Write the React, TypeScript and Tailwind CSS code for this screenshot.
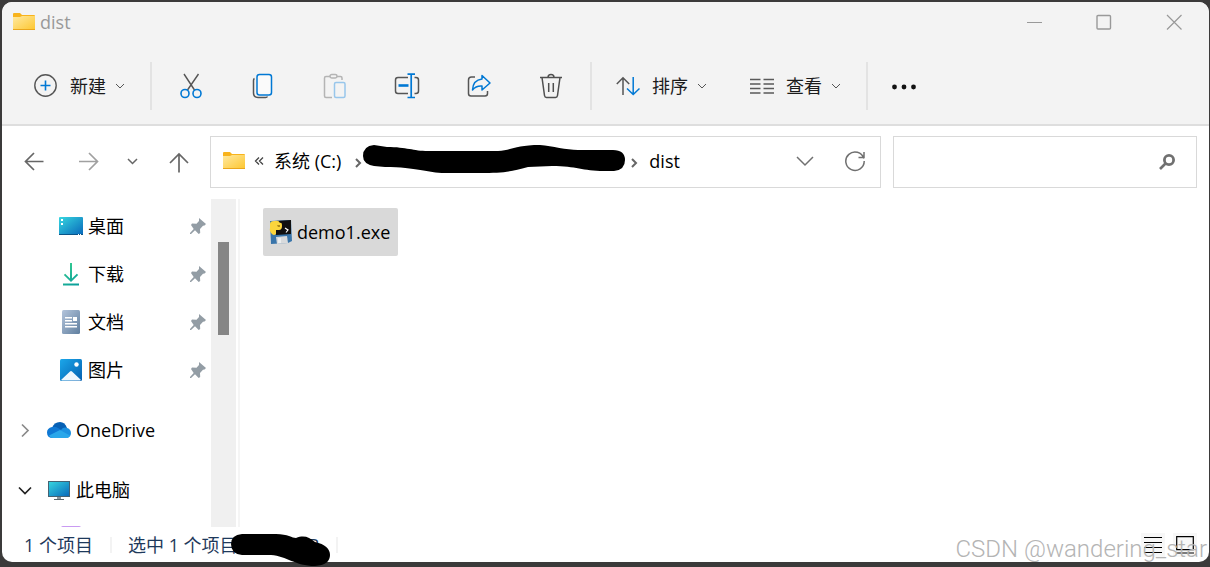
import React from 'react';

type IconProps = { className?: string };

const ChevronDown: React.FC<IconProps> = ({ className }) => (
    <svg viewBox="0 0 12 12" className={className} fill="none" stroke="currentColor">
        <path d="M2 4l4 4 4-4" />
    </svg>
);

const ChevronRight: React.FC<IconProps> = ({ className }) => (
    <svg viewBox="0 0 12 12" className={className} fill="none" stroke="currentColor" strokeWidth="2">
        <path d="M3 2l4 4-4 4" />
    </svg>
);

const FolderIcon: React.FC = () => (
    <svg viewBox="0 0 24 20" className="h-5 w-6 shrink-0">
        <defs>
            <linearGradient id="folder" x1="0" y1="0" x2="1" y2="1">
                <stop offset="0" stopColor="#ffe9a0" />
                <stop offset="1" stopColor="#fdc62f" />
            </linearGradient>
        </defs>
        <path d="M1 2q0-1 1-1h6l2 2h12q1 0 1 1v5H1z" fill="#f8b31c" />
        <path d="M1 5h7l2-1h13v14H1z" fill="url(#folder)" />
        <path d="M1 17h22v1H1z" fill="#eaa61c" />
    </svg>
);

const NewIcon: React.FC = () => (
    <svg viewBox="0 0 24 24" className="h-6 w-6" fill="none" strokeWidth="1.4">
        <circle cx="11.500" cy="11.500" r="10.700" stroke="#555" />
        <path d="M11.500 6.500v10M6.500 11.500h10" stroke="#0078d4" strokeWidth="1.6" />
    </svg>
);

const CutIcon: React.FC = () => (
    <svg viewBox="0 0 24 26" className="h-[26px] w-6" fill="none" strokeWidth="1.4">
        <path d="M5 1l10.5 16M19.5 1L8.5 17" stroke="#555" />
        <circle cx="6" cy="20.5" r="4" stroke="#0078d4" strokeWidth="1.6" />
        <circle cx="18" cy="20.5" r="4" stroke="#0078d4" strokeWidth="1.6" />
    </svg>
);

const CopyIcon: React.FC = () => (
    <svg viewBox="0 0 24 26" className="h-[26px] w-6" fill="none" strokeWidth="1.5">
        <path d="M3.500 5.500q-1 .5-1 2V20q0 4.500 4.500 4.500h7.500q1.500 0 2-1" stroke="#555" />
        <rect x="6" y="1.500" width="14.500" height="20.500" rx="2.500" stroke="#0078d4" fill="#fafafa" />
    </svg>
);

const PasteIcon: React.FC = () => (
    <svg viewBox="0 0 24 26" className="h-[26px] w-6" fill="none" strokeWidth="1.5">
        <path d="M7 3.500H3q-1.500 0-1.500 1.500v18q0 1.500 1.500 1.500h6M14 3.500h3.500q1.500 0 1.500 1.500v2" stroke="#b4b4b4" />
        <rect x="7" y="1.500" width="7" height="3.500" rx="1.700" stroke="#b4b4b4" />
        <rect x="11.500" y="9.500" width="10.500" height="15" rx="1.500" stroke="#98c6eb" />
    </svg>
);

const RenameIcon: React.FC = () => (
    <svg viewBox="0 0 26 26" className="h-[26px] w-[26px]" fill="none" strokeWidth="1.500">
        <path d="M14 4.500H4Q1.500 4.500 1.500 7v11q0 2.500 2.500 2.500h10M20.500 4.500h1.500q2.500 0 2.500 2.500v11q0 2.500-2.500 2.500h-1.500" stroke="#555" />
        <path d="M13.500 1.200h7.500M13.500 24.500h7.500M17.200 1.200v23.300" stroke="#0078d4" strokeWidth="1.700" />
        <path d="M4.500 12.500h10" stroke="#0078d4" strokeWidth="2.600" />
    </svg>
);

const ShareIcon: React.FC = () => (
    <svg viewBox="0 0 24 24" className="h-6 w-6" fill="none" strokeWidth="1.500">
        <path d="M8 3H4.500Q1.500 3 1.500 6v13.500q0 2.500 2.500 2.500h14q2.500 0 2.500-2.500V17" stroke="#555" />
        <path d="M15 1.500l8 7.500-8 7v-4q-6-.5-9.500 4Q6 6 15 5z" stroke="#0078d4" strokeLinejoin="round" />
    </svg>
);

const DeleteIcon: React.FC = () => (
    <svg viewBox="0 0 24 26" className="h-[26px] w-6" fill="none" stroke="#4f4f4f" strokeWidth="1.500">
        <path d="M1 4.500h22M9 4.500q0-3 3-3t3 3M3 4.500l2.500 18q.3 2 2 2h9q1.700 0 2-2L21 4.500M9.700 10v9M14.300 10v9" />
    </svg>
);

const SortIcon: React.FC = () => (
    <svg viewBox="0 0 24 24" className="h-6 w-6" fill="none" strokeWidth="1.500">
        <path d="M7 21V4M.8 10L7 3.700 13.200 10" stroke="#555" />
        <path d="M17.200 3v17.500M11 14.500l6.200 6 6.300-6" stroke="#0078d4" />
    </svg>
);

const ViewIcon: React.FC = () => (
    <svg viewBox="0 0 24 24" className="h-6 w-6" stroke="#5a5a5a" strokeWidth="1.300">
        <path d="M0 5.500h10.500M0 10h10.500M0 14.500h10.500M0 19h10.500M13.500 5.500H24M13.500 10H24M13.500 14.500H24M13.500 19H24" />
    </svg>
);

const DesktopIcon: React.FC = () => (
    <svg viewBox="0 0 24 24" className="h-6 w-6">
        <defs>
            <linearGradient id="screen" x1="0" y1="0" x2="1" y2="1">
                <stop offset="0" stopColor="#37d7e0" />
                <stop offset="1" stopColor="#0867ba" />
            </linearGradient>
        </defs>
        <rect y="3" width="24" height="18" rx="1" fill="url(#screen)" />
        <path d="M2 5h2v2H2zM2 9h2v2H2z" fill="#fff" />
        <path d="M0 20h24v1H0z" fill="#0a5487" />
        <path d="M19 20h1v1h-1zM21 20h1v1h-1z" fill="#fff" />
    </svg>
);

const DownloadIcon: React.FC = () => (
    <svg viewBox="0 0 24 24" className="h-6 w-6" fill="none">
        <defs>
            <linearGradient id="download" gradientUnits="userSpaceOnUse" x1="4" y1="0" x2="20" y2="24">
                <stop offset="0" stopColor="#3bd28f" />
                <stop offset="1" stopColor="#069a9c" />
            </linearGradient>
        </defs>
        <path d="M11 1h2v15.500l4.800-4.800 1.400 1.400L12 20l-7.200-6.900 1.400-1.400 4.800 4.800zM4 21.500h16v2H4z" fill="url(#download)" />
    </svg>
);

const DocumentIcon: React.FC = () => (
    <svg viewBox="0 0 24 24" className="h-6 w-6">
        <defs>
            <linearGradient id="document" x1="0" y1="0" x2="1" y2="1">
                <stop offset="0" stopColor="#b3c4db" />
                <stop offset="1" stopColor="#607f9f" />
            </linearGradient>
        </defs>
        <rect x="3" width="18" height="24" rx="1.500" fill="url(#document)" />
        <path d="M6 7h7v1.500H6zM6 10h7v1.500H6zM14 7h4v4h-4zM6 13h12v1.500H6zM6 16h12v1.500H6z" fill="#fff" />
    </svg>
);

const PictureIcon: React.FC = () => (
    <svg viewBox="0 0 24 24" className="h-6 w-6">
        <defs>
            <linearGradient id="picture" x1="0" y1="0" x2="1" y2="1">
                <stop offset="0" stopColor="#1ba7ea" />
                <stop offset="1" stopColor="#0660b0" />
            </linearGradient>
        </defs>
        <rect x="1" y="1" width="22" height="22" rx="1.500" fill="url(#picture)" />
        <circle cx="17.500" cy="6.500" r="2.200" fill="#fff" />
        <path d="M2 22l9-8.500q1-1 2 0L22 22q-1 .5-2 .5H4q-1 0-2-.5z" fill="#f0f7fd" />
    </svg>
);

const CloudIcon: React.FC = () => (
    <svg viewBox="0 0 24 24" className="h-6 w-6">
        <path d="M5 10Q7 4 13 4q5 0 7 6l-6 6z" fill="#0660b5" />
        <path d="M5 9q3-1 6 1l7 4-12 6Q0 20 0 14.500 0 10 5 9z" fill="#0f78d4" />
        <path d="M14 12q2-3 5.500-2.300Q24 11 24 15q0 4-4 5l-6-4z" fill="#1b90e0" />
        <path d="M2 17.500L13 12l10 5.500q-1 2.500-4 2.500H6q-3 0-4-2.500z" fill="#2aa7ea" />
    </svg>
);

const ComputerIcon: React.FC = () => (
    <svg viewBox="0 0 24 24" className="h-6 w-6">
        <rect x="1.500" y="3.500" width="21" height="15" fill="url(#screen)" stroke="#456273" />
        <path d="M10 19h4v2h-4z" fill="#8b979d" />
        <path d="M7 21h10v1H7z" fill="#59666d" />
    </svg>
);

const VideoIcon: React.FC = () => (
    <svg viewBox="0 0 24 24" className="h-6 w-6">
        <rect x="2" width="20" height="24" rx="2" fill="#c99af2" />
    </svg>
);

const PinIcon: React.FC = () => (
    <svg viewBox="0 0 18 18" className="h-[18px] w-[18px]">
        <path d="M10 1l7 6-1.500 1.500-1.500.2-3 3.300.2 4-1.500 1-3.700-3.700L2 17H1v-1l3.700-4L2 8l1-1.500 4.500.2L10 4V2.500z" fill="#939da5" />
    </svg>
);

const PythonAppIcon: React.FC = () => (
    <svg viewBox="0 0 24 26" className="h-[26px] w-6">
        <path d="M1 2l21-1 1 21-4 2-17 1z" fill="#3975aa" />
        <path d="M6 2l16-1v14L7 16z" fill="#101010" />
        <path d="M7 18l11-1 1 7-11 1z" fill="#d8dadc" />
        <path d="M9 19h3v5H9z" fill="#eceeef" />
        <path d="M1 5q0-3 4-3 5-1 6 2 2-1 2 3t-3 4H7v4q-2 2-4 0Q0 12 1 9z" fill="#fbd53c" />
        <path d="M8 6h3v2H9z" fill="#b08c16" />
        <path d="M16 9l3 2-2 2.500" fill="none" stroke="#fff" strokeWidth="1.200" />
    </svg>
);

const fileActions = [
    { label: '剪切', icon: <CutIcon /> },
    { label: '复制', icon: <CopyIcon /> },
    { label: '粘贴', icon: <PasteIcon /> },
    { label: '重命名', icon: <RenameIcon /> },
    { label: '共享', icon: <ShareIcon /> },
    { label: '删除', icon: <DeleteIcon /> },
];

const quickAccess = [
    { label: '桌面', icon: <DesktopIcon /> },
    { label: '下载', icon: <DownloadIcon /> },
    { label: '文档', icon: <DocumentIcon /> },
    { label: '图片', icon: <PictureIcon /> },
];

const MenuButton: React.FC<{ label: string; icon: React.ReactNode }> = ({ label, icon }) => (
    <button className="flex h-12 items-center">
        {icon}
        <span className="ml-3">{label}</span>
        <ChevronDown className="ml-2 h-3 w-3 text-[#555]" />
    </button>
);

const Divider: React.FC = () => <div className="h-12 w-[2px] bg-[#e3e3e3]" />;

const TitleBar: React.FC = () => (
    <div className="mb-1.5 flex h-10 items-center pl-2.5 text-[#999]">
        <FolderIcon />
        <h1 className="ml-1 flex-1">dist</h1>
        <button aria-label="最小化" className="flex w-[69px] justify-center">
            <svg viewBox="0 0 16 16" className="h-4 w-4" stroke="currentColor"><path d="M0 8.500h15" /></svg>
        </button>
        <button aria-label="最大化" className="flex w-[69px] justify-center">
            <svg viewBox="0 0 16 16" className="h-4 w-4" fill="none" stroke="currentColor" strokeWidth="1.400"><rect x="1" y="1.500" width="13.500" height="13.500" rx="1" /></svg>
        </button>
        <button aria-label="关闭" className="flex w-[71px] justify-center">
            <svg viewBox="0 0 16 16" className="h-4 w-4" stroke="currentColor" strokeWidth="1.200"><path d="M1 1l14.500 14.500M15.500 1L1 15.500" /></svg>
        </button>
    </div>
);

const Toolbar: React.FC = () => (
    <div className="flex h-[76px] items-center pl-8 text-[#1b1b1b]">
        <MenuButton label="新建" icon={<NewIcon />} />
        <div className="ml-6 flex items-center gap-[3px]">
            <Divider />
            <div className="flex">
                {fileActions.map(a => (
                    <button key={a.label} aria-label={a.label} className="flex h-12 w-[72px] items-center justify-center">
                        {a.icon}
                    </button>
                ))}
            </div>
            <Divider />
        </div>
        <div className="mr-6 ml-6 flex gap-[42px]">
            <MenuButton label="排序" icon={<SortIcon />} />
            <MenuButton label="查看" icon={<ViewIcon />} />
        </div>
        <Divider />
        <button aria-label="更多" className="ml-6">
            <svg viewBox="0 0 24 24" className="h-6 w-6" fill="#111">
                <circle cx="2.500" cy="13" r="2.400" />
                <circle cx="12" cy="13" r="2.400" />
                <circle cx="21.500" cy="13" r="2.400" />
            </svg>
        </button>
    </div>
);

const NavigationBar: React.FC = () => (
    <div className="flex items-center pt-2.5 pr-3 pb-[11px] pl-1.5 text-[#666]">
        <button aria-label="后退" className="flex w-[54px] justify-center">
            <svg viewBox="0 0 24 24" className="h-6 w-6" fill="none" stroke="currentColor" strokeWidth="1.700"><path d="M20.500 11.500H3M11 3l-8.500 8.500L11 20" /></svg>
        </button>
        <button aria-label="前进" className="flex w-[54px] justify-center text-[#a0a0a0]">
            <svg viewBox="0 0 24 24" className="h-6 w-6" fill="none" stroke="currentColor" strokeWidth="1.700"><path d="M2 11.500h18M12 3l8.500 8.500L12 20" /></svg>
        </button>
        <button aria-label="最近浏览的位置" className="flex w-[34px] justify-center">
            <svg viewBox="0 0 14 14" className="h-3.5 w-3.5" fill="none" stroke="currentColor" strokeWidth="1.500"><path d="M2 4l4.500 4.500L11 4" /></svg>
        </button>
        <button aria-label="向上" className="mr-0.5 flex w-[58px] justify-center">
            <svg viewBox="0 0 24 24" className="h-6 w-6" fill="none" stroke="currentColor" strokeWidth="1.700"><path d="M12 22.500V4.500M3 13l9-9 9 9" /></svg>
        </button>
        <div className="flex h-[52px] min-w-0 flex-1 items-center border border-[#d9d9d9] pb-0.5 pl-[11px] text-black">
            <FolderIcon />
            <svg viewBox="0 0 10 10" className="ml-2 h-2.5 w-2.5 shrink-0" fill="none" stroke="#444" strokeWidth="1.300"><path d="M5 1.500L1.500 5 5 8.500M9 1.500L5.500 5 9 8.500" /></svg>
            <button className="ml-2.5 whitespace-nowrap">系统 (C:)</button>
            <ChevronRight className="mt-1 ml-3 h-3 w-3 shrink-0 text-[#666]" />
            <svg viewBox="0 0 262 30" className="-ml-0.5 mb-1 h-[30px] w-[262px] shrink-0">
                <path d="M11 1Q0 2 0 12q0 8 11 10l11 1c32 0 42 6 60 6h35c22 0 30-1 48-6l24-1c25 0 30 5 52 5h10q11-1 11-11T250 6h-35c-12 0-25-4-38-5-24 0-28 5-42 6H65C50 7 44 3 24 3z" fill="#000" />
            </svg>
            <ChevronRight className="mt-1 ml-1 h-3 w-3 shrink-0 text-[#666]" />
            <button className="ml-2">dist</button>
            <button aria-label="历史记录" className="ml-auto flex w-[50px] justify-center text-[#707070]">
                <svg viewBox="0 0 18 18" className="h-[18px] w-[18px]" fill="none" stroke="currentColor" strokeWidth="1.500"><path d="M1 5l8 8 8-8" /></svg>
            </button>
            <button aria-label="刷新" className="flex w-[50px] justify-center text-[#707070]">
                <svg viewBox="0 0 22 22" className="h-[22px] w-[22px]" fill="none" stroke="currentColor" strokeWidth="1.500"><path d="M19.800 8.500A9.200 9.200 0 1 0 20.200 11M20 2v5.500h-5.500" /></svg>
            </button>
        </div>
        <label className="ml-3 flex h-[52px] w-[304px] items-center border border-[#d9d9d9] pr-5">
            <input type="search" aria-label="搜索" className="h-full min-w-0 flex-1 px-3 outline-none" />
            <svg viewBox="0 0 18 18" className="h-[18px] w-[18px]" fill="none" stroke="#707070"><circle cx="11" cy="7" r="4.600" strokeWidth="2.800" /><path d="M8 10l-6 6" strokeWidth="2.600" /></svg>
        </label>
    </div>
);

const Sidebar: React.FC = () => (
    <nav className="flex w-[238px] shrink-0 overflow-hidden border-r-2 border-[#f5f5f5]">
        <div className="w-[209px] pt-[3px]">
            {quickAccess.map(item => (
                <a key={item.label} href="#" className="flex h-12 items-center pr-1 pl-[57px]">
                    {item.icon}
                    <span className="ml-[5px] flex-1">{item.label}</span>
                    <PinIcon />
                </a>
            ))}
            <a href="#" className="mt-3 flex h-12 items-center pl-[15px]">
                <svg viewBox="0 0 16 16" className="mr-3.5 h-4 w-4" fill="none" stroke="#8a8a8a" strokeWidth="1.700"><path d="M5 2.500l6 6-6 6" /></svg>
                <CloudIcon />
                <span className="ml-[5px]">OneDrive</span>
            </a>
            <a href="#" className="mt-3 flex h-12 items-center pl-[15px]">
                <svg viewBox="0 0 16 16" className="mr-3.5 h-4 w-4" fill="none" stroke="#222" strokeWidth="1.700"><path d="M2 5.500l6 6 6-6" /></svg>
                <ComputerIcon />
                <span className="ml-[5px]">此电脑</span>
            </a>
            <a href="#" aria-label="视频" className="flex h-12 items-center pl-[57px]">
                <VideoIcon />
            </a>
        </div>
        {/* scrollbar */}
        <div className="w-[25px] bg-[#f0f0f0] pt-[43px] pl-[7px]">
            <div className="h-[93px] w-[11px] bg-[#868686]" />
        </div>
    </nav>
);

const StatusBar: React.FC = () => (
    <footer className="relative flex h-[35px] items-center pl-[22px] text-[#1e395b]">
        <span>1 个项目</span>
        <span className="ml-[17px] h-4 w-[2px] bg-[#f3f3f3]" />
        <span className="ml-4">选中 1 个项目</span>
        <span className="ml-[54px]">MB</span>
        <span className="ml-[17px] h-4 w-[2px] bg-[#f3f3f3]" />
        <div className="mr-3 ml-auto flex gap-2">
            <button aria-label="详细信息" className="flex h-6 w-6 items-center justify-center bg-[#f7f7f7]">
                <svg viewBox="0 0 18 18" className="h-[18px] w-[18px]" stroke="#000" strokeWidth="1.200"><path d="M0 1.500h18M0 6.500h18M0 11.500h18M0 16.500h18" /></svg>
            </button>
            <button aria-label="大图标" className="flex h-6 w-6 items-center justify-center bg-[#f7f7f7]">
                <svg viewBox="0 0 18 18" className="h-[18px] w-[18px]" fill="none" stroke="#000" strokeWidth="1.200"><path d="M.7.7h16.600v13H.7zM0 17h18" /></svg>
            </button>
        </div>
        <svg viewBox="0 0 100 34" className="absolute top-1.5 left-[229px] h-[34px] w-[100px]">
            <path d="M11 1h34c12 0 16 4 20 4 8-3 13-1 19 4 10 2 15 7 15 13q0 10-15 11c-20 0-28-10-44-11H11Q0 21 0 11 0 2 11 1z" fill="#000" />
        </svg>
        <span className="pointer-events-none absolute top-2.5 right-0.5 font-['Roboto'] text-[24px] leading-6 font-light text-[#b4b4b4]">CSDN @wandering_star</span>
    </footer>
);

const App: React.FC = () => (
    <div className="flex h-screen flex-col bg-[#3b3a3a] pt-0.5 pr-px pb-[5px] pl-0.5 font-['Open_Sans','Noto_Sans_CJK_SC',sans-serif] text-[18px] leading-6">
        <div className="flex min-h-0 flex-1 flex-col rounded-[10px] bg-white">
            <header className="rounded-t-[10px] border-b-2 border-[#dedede] bg-[#f3f3f3]">
                <TitleBar />
                <Toolbar />
            </header>
            <NavigationBar />
            <div className="flex min-h-0 flex-1">
                <Sidebar />
                <main className="flex-1 px-[23px] pt-[9px]">
                    <button className="flex h-12 items-center rounded-[2px] bg-[#d9d9d9] pr-2 pl-1.5">
                        <PythonAppIcon />
                        <span className="ml-1">demo1.exe</span>
                    </button>
                </main>
            </div>
            <StatusBar />
        </div>
    </div>
);

export default App;
